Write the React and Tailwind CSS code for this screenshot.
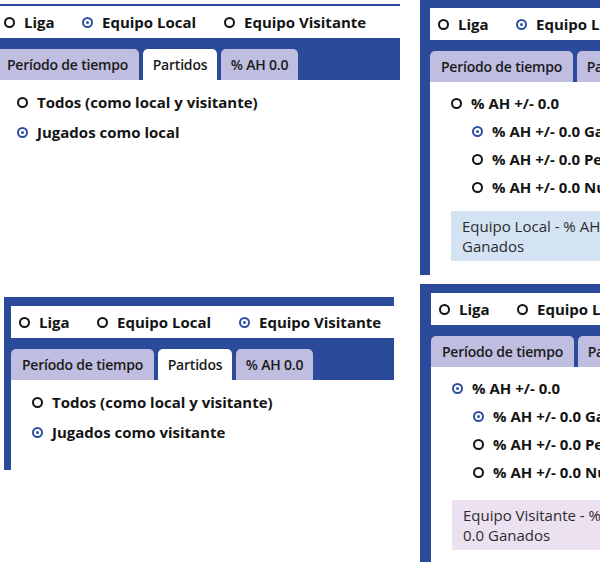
import React from 'react';

const Radio = ({ checked }) =>
    checked ? (
        <span className="flex h-[11px] w-[11px] shrink-0 items-center justify-center rounded-full border-2 border-[#2e4fa3]">
            <span className="h-[3px] w-[3px] rounded-full bg-[#2e4fa3]" />
        </span>
    ) : (
        <span className="h-[11px] w-[11px] shrink-0 rounded-full border-2 border-[#141414]" />
    );

const Option = ({ checked, label, className = '' }) => (
    <div className={`flex shrink-0 items-center gap-[9px] whitespace-nowrap ${className}`}>
        <Radio checked={checked} />
        <span>{label}</span>
    </div>
);

// Liga / Equipo Local / Equipo Visitante selector
const SourceRow = ({ source }) => (
    <div className="flex h-[32px] items-center bg-white pl-[8px] text-[15px] font-bold text-[#141414]">
        <Option className="w-[78px] gap-[7px]" checked={source === 'liga'} label="Liga" />
        <Option className="w-[142px] gap-[7px]" checked={source === 'local'} label="Equipo Local" />
        <Option className="gap-[7px]" checked={source === 'visitante'} label="Equipo Visitante" />
    </div>
);

const tabs = [
    { id: 'periodo', label: 'Período de tiempo', width: 'w-[143px]' },
    { id: 'partidos', label: 'Partidos', width: 'w-[74px]' },
    { id: 'ah', label: '% AH 0.0', width: 'w-[77px]' },
];

const TabBar = ({ active }) => (
    <div className="flex gap-1 bg-[#2c4a9a] pt-[11px]">
        {tabs.map((t) => (
            <div
                key={t.id}
                className={`flex h-[31px] shrink-0 items-center justify-center rounded-t-[5px] text-[14px] font-semibold tracking-[-0.2px] whitespace-nowrap text-[#1a1a1a] ${t.width} ${
                    active === t.id ? 'bg-white' : 'bg-[#bfbde0]'
                }`}
            >
                {t.label}
            </div>
        ))}
    </div>
);

const PartidosContent = ({ label, className }) => (
    <div className={`bg-white pt-[7px] pl-[21px] text-[15px] font-bold text-[#141414] ${className}`}>
        <Option className="h-[30px]" label="Todos (como local y visitante)" />
        <Option className="h-[30px]" checked label={label} />
    </div>
);

const AhContent = ({ topChecked, box, boxClass, className }) => (
    <div className={`bg-white pt-[7px] pl-[21px] ${className}`}>
        <div className="text-[15px] font-bold text-[#141414]">
            <Option className="h-[28px]" checked={topChecked} label="% AH +/- 0.0" />
            <div className="ml-[21px]">
                <Option className="h-[28px]" checked label="% AH +/- 0.0 Ganados" />
                <Option className="h-[28px]" label="% AH +/- 0.0 Perdidos" />
                <Option className="h-[28px]" label="% AH +/- 0.0 Nulos" />
            </div>
        </div>
        <div className={`w-[240px] px-[11px] py-[5px] text-[15px] leading-[20px] whitespace-nowrap text-[#2b2b2b] ${boxClass}`}>
            {box[0]}
            <br />
            {box[1]}
        </div>
    </div>
);

export default function App() {
    return (
        <div className="flex h-[577px] w-[600px] overflow-hidden bg-white font-[family-name:Open_Sans,sans-serif]">
            {/* left column */}
            <div className="flex w-[420px] shrink-0 flex-col overflow-hidden">
                <div className="w-[400px] pt-[4px]">
                    <div className="-ml-1 border-t-2 border-[#2c4a9a]">
                        <SourceRow source="local" />
                        <TabBar active="partidos" />
                        <PartidosContent label="Jugados como local" className="h-[217px]" />
                    </div>
                </div>

                <div className="ml-[4px] w-[390px] border-t-[9px] border-l-[7px] border-[#2c4a9a]">
                    <SourceRow source="visitante" />
                    <TabBar active="partidos" />
                    <PartidosContent label="Jugados como visitante" className="h-[90px]" />
                </div>
            </div>

            {/* right column */}
            <div className="flex w-[180px] shrink-0 flex-col overflow-hidden">
                <div className="w-[420px] border-t-8 border-l-[10px] border-[#2c4a9a]">
                    <SourceRow source="local" />
                    <TabBar active="ah" />
                    <AhContent
                        topChecked={false}
                        box={['Equipo Local - % AH +/- 0.0', 'Ganados']}
                        className="pb-[14px]"
                        boxClass="mt-[10px] bg-[#d4e3f4]"
                    />
                </div>

                <div className="mt-[9px] w-[420px] border-t-[9px] border-l-[11px] border-[#2c4a9a]">
                    <SourceRow source="visitante" />
                    <TabBar active="ah" />
                    <AhContent
                        topChecked
                        box={['Equipo Visitante - % AH +/-', '0.0 Ganados']}
                        className="pb-[12px]"
                        boxClass="mt-[14px] bg-[#ebe1f1]"
                    />
                </div>
            </div>
        </div>
    );
}
